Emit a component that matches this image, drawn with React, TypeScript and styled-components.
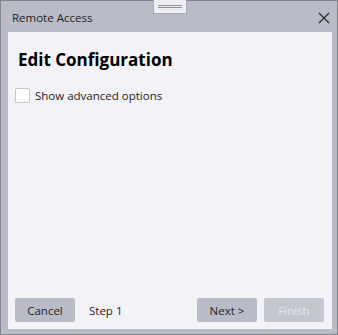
import React, { useState } from "react";
import styled, { createGlobalStyle } from "styled-components";

const GlobalStyle = createGlobalStyle`
  html, body {
    margin: 0;
    padding: 0;
    background: #ffffff;
  }
  body {
    font-family: "Open Sans", "Noto Sans", sans-serif;
  }
`;

const Frame = styled.div`
  position: relative;
  width: 338px;
  height: 335px;
  box-sizing: border-box;
  border: 1px solid #84868e;
  background: #b9bcc6;
  display: flex;
  flex-direction: column;
`;

const Grip = styled.div`
  position: absolute;
  top: -1px;
  left: 152px;
  width: 34px;
  height: 14px;
  box-sizing: border-box;
  background: #eeeef3;
  border: 1px solid #a9abb3;
  border-top: none;
  display: flex;
  flex-direction: column;
  align-items: center;
  justify-content: center;
  gap: 1px;
  padding-bottom: 1px;
  span {
    display: block;
    width: 24px;
    height: 1px;
    background: #8e9098;
  }
`;

const TitleBar = styled.div`
  height: 31px;
  display: flex;
  align-items: center;
  justify-content: space-between;
  padding: 0 5px 0 11px;
`;

const Title = styled.div`
  font-size: 11.5px;
  color: #1e1e22;
  padding-top: 2px;
`;

const CloseButton = styled.button`
  width: 16px;
  height: 16px;
  border: none;
  background: transparent;
  padding: 0;
  display: flex;
  align-items: center;
  justify-content: center;
  cursor: pointer;
  margin-top: 2px;
`;

const Panel = styled.div`
  flex: 1;
  margin: 0 5px 5px 7px;
  background: #f2f2f7;
  display: flex;
  flex-direction: column;
  padding: 15px 8px 7px 7px;
`;

const Heading = styled.h1`
  margin: 0 0 0 3px;
  font-size: 17px;
  font-weight: 700;
  color: #000000;
  line-height: 26px;
`;

const CheckRow = styled.label`
  display: flex;
  align-items: center;
  gap: 5px;
  margin-top: 15px;
  font-size: 11.5px;
  color: #1e1e22;
  cursor: pointer;
`;

const Box = styled.span<{ $checked: boolean }>`
  width: 15px;
  height: 15px;
  box-sizing: border-box;
  background: #ffffff;
  border: 1px solid #c6c7cd;
  border-radius: 2px;
  display: flex;
  align-items: center;
  justify-content: center;
  font-size: 11px;
  color: ${(p) => (p.$checked ? "#333" : "transparent")};
`;

const Footer = styled.div`
  margin-top: auto;
  display: flex;
  align-items: center;
`;

const Button = styled.button<{ $disabled?: boolean }>`
  width: 60px;
  height: 24px;
  border: none;
  border-radius: 2px;
  font-family: "Open Sans", "Noto Sans", sans-serif;
  font-size: 11.5px;
  padding: 0;
  background: ${(p) => (p.$disabled ? "#c4c7ce" : "#b9bcc6")};
  color: ${(p) => (p.$disabled ? "#e4e5ea" : "#1e1e22")};
`;

const StepLabel = styled.div`
  font-size: 11.5px;
  color: #1e1e22;
  margin-left: 14px;
  flex: 1;
`;

const RightButtons = styled.div`
  display: flex;
  gap: 7px;
`;

export default function App() {
  const [advanced, setAdvanced] = useState(false);
  return (
    <>
      <GlobalStyle />
      <Frame>
        <Grip>
          <span />
          <span />
        </Grip>
        <TitleBar>
          <Title>Remote Access</Title>
          <CloseButton aria-label="Close">
            <svg width="12" height="12" viewBox="0 0 12 12">
              <path d="M1 1 L11 11 M11 1 L1 11" stroke="#2a2a2e" strokeWidth="1.2" />
            </svg>
          </CloseButton>
        </TitleBar>
        <Panel>
          <Heading>Edit Configuration</Heading>
          <CheckRow onClick={() => setAdvanced(!advanced)}>
            <Box $checked={advanced}>✓</Box>
            Show advanced options
          </CheckRow>
          <Footer>
            <Button>Cancel</Button>
            <StepLabel>Step 1</StepLabel>
            <RightButtons>
              <Button>Next &gt;</Button>
              <Button $disabled>Finish</Button>
            </RightButtons>
          </Footer>
        </Panel>
      </Frame>
    </>
  );
}
